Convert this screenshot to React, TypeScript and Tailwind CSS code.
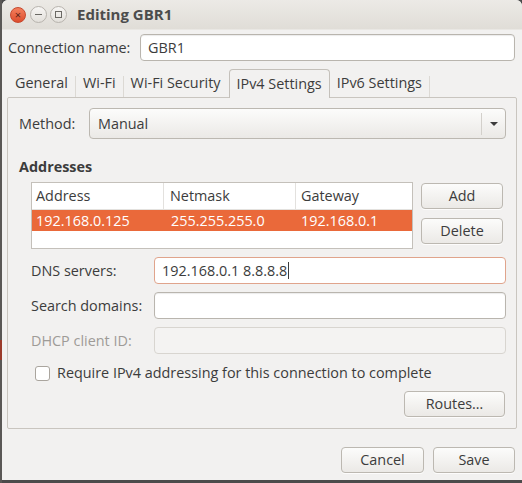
import React from 'react';

const font = { fontFamily: '"Open Sans", "DejaVu Sans", sans-serif' };

function Btn({ label, className = '' }: { label: string; className?: string }) {
  return (
    <div
      className={`flex items-center justify-center h-[26px] rounded-[4px] border border-[#bcb8b1] bg-gradient-to-b from-[#fcfcfb] to-[#ebe9e6] text-[#3c3c3c] shadow-[0_1px_0_rgba(255,255,255,0.8)] ${className}`}
    >
      {label}
    </div>
  );
}

function Field({ value, state = 'normal', className = '' }: { value?: string; state?: 'normal' | 'focus' | 'disabled'; className?: string }) {
  const look =
    state === 'focus'
      ? 'border-[#e0a48c] bg-white'
      : state === 'disabled'
      ? 'border-[#d8d5d0] bg-[#f4f3f2]'
      : 'border-[#b9b5ae] bg-white shadow-[inset_0_1px_1px_rgba(0,0,0,0.08)]';
  return (
    <div className={`flex items-center h-[27px] rounded-[4px] border px-[7px] text-[#3c3c3c] ${look} ${className}`}>
      {value}
      {state === 'focus' && <span className="w-px h-[17px] bg-[#3c3c3c] ml-px" />}
    </div>
  );
}

export default function App() {
  const tabs = ['General', 'Wi-Fi', 'Wi-Fi Security', 'IPv4 Settings', 'IPv6 Settings'];
  return (
    <div className="w-[522px] h-[483px] bg-[#4b4b4b] flex text-[14.4px] text-[#3c3c3c] overflow-hidden" style={font}>
      <div className="w-[2px] flex flex-col">
        <div className="h-[340px] bg-[#5a5856]" />
        <div className="h-[20px] bg-[#9b3b2a]" />
        <div className="flex-1 bg-[#5a5856]" />
      </div>
      <div className="w-[520px] h-[480px] flex flex-col bg-[#f2f1f0] rounded-t-[6px] overflow-hidden">
        {/* title bar */}
        <div className="h-[30px] flex items-center bg-gradient-to-b from-[#eceae6] to-[#e0ddd7] border-b border-[#e9e7e3]">
          <div className="ml-[8px] w-[16px] h-[16px] rounded-full bg-gradient-to-b from-[#f47f5d] to-[#dc4c2c] border border-[#c6482d] flex items-center justify-center text-[#5a2418] text-[11px] leading-none">
            ×
          </div>
          <div className="ml-[4px] w-[17px] h-[17px] rounded-full border border-[#b7b3ad] bg-gradient-to-b from-[#f7f6f4] to-[#e3e0db] flex items-center justify-center">
            <div className="w-[7px] h-px bg-[#6b6964]" />
          </div>
          <div className="ml-[3px] w-[17px] h-[17px] rounded-full border border-[#b7b3ad] bg-gradient-to-b from-[#f7f6f4] to-[#e3e0db] flex items-center justify-center">
            <div className="w-[7px] h-[7px] border border-[#6b6964]" />
          </div>
          <span className="ml-[10px] font-bold text-[15px] text-[#4c4c4c]">Editing GBR1</span>
        </div>

        <div className="flex-1 flex flex-col px-[5px]">
          {/* connection name */}
          <div className="flex items-center mt-[4px] h-[27px]">
            <span className="ml-px w-[132px]">Connection name:</span>
            <Field value="GBR1" className="w-[375px]" />
          </div>

          {/* tabs */}
          <div className="flex items-end h-[28px] mt-[8px] pl-[1px] relative z-10">
            {tabs.map((t, i) => {
              const active = i === 3;
              return (
                <div key={t} className="flex items-end h-full">
                  {(i === 1 || i === 2) && <div className="w-px h-[21px] bg-[#dcd9d4]" />}
                  <div
                    className={
                      active
                        ? 'h-[29px] -mb-px ml-px px-[7px] flex items-center border border-b-0 border-[#c4c0ba] rounded-t-[4px] bg-[#f2f1f0]'
                        : 'h-[28px] px-[7px] flex items-center'
                    }
                  >
                    {t}
                  </div>
                  {i === 4 && <div className="w-px h-[21px] bg-[#dcd9d4]" />}
                </div>
              );
            })}
          </div>

          {/* notebook page */}
          <div className="h-[332px] border border-[#c9c5bf] rounded-[2px] flex flex-col pl-[11px] pr-[10px]">
            <div className="flex items-center mt-[10px] h-[31px]">
              <span className="w-[70px]">Method:</span>
              <div className="flex-1 h-[31px] flex items-center rounded-[4px] border border-[#bcb8b1] bg-gradient-to-b from-[#fcfcfb] to-[#ebe9e6]">
                <span className="flex-1 pl-[8px]">Manual</span>
                <div className="w-px h-[22px] bg-[#d3d0cb]" />
                <div className="w-[23px] flex justify-center">
                  <div className="w-0 h-0 border-l-[4px] border-r-[4px] border-t-[4px] border-l-transparent border-r-transparent border-t-[#3c3c3c]" />
                </div>
              </div>
            </div>

            <div className="mt-[18px] h-[20px] leading-[20px] font-bold">Addresses</div>

            <div className="flex mt-[5px] ml-[12px]">
              <div className="w-[382px] h-[67px] border border-[#c4c0ba] bg-white flex flex-col">
                <div className="h-[27px] flex border-b border-[#e3e1de]">
                  <div className="w-[132px] pl-[4px] flex items-center border-r border-[#e3e1de]">Address</div>
                  <div className="w-[132px] pl-[6px] flex items-center border-r border-[#e3e1de]">Netmask</div>
                  <div className="flex-1 pl-[5px] flex items-center">Gateway</div>
                </div>
                <div className="h-[21px] flex bg-[#ea693a] text-white">
                  <div className="w-[132px] pl-[4px] flex items-center">192.168.0.125</div>
                  <div className="w-[132px] pl-[7px] flex items-center">255.255.255.0</div>
                  <div className="flex-1 pl-[5px] flex items-center">192.168.0.1</div>
                </div>
              </div>
              <div className="ml-[8px] flex flex-col pt-[1px]">
                <Btn label="Add" className="w-[82px]" />
                <Btn label="Delete" className="w-[82px] mt-[9px]" />
              </div>
            </div>

            <div className="flex flex-col gap-[8px] mt-[8px] ml-[12px]">
              <div className="flex items-center">
                <span className="w-[123px]">DNS servers:</span>
                <Field value="192.168.0.1 8.8.8.8" state="focus" className="flex-1" />
              </div>
              <div className="flex items-center">
                <span className="w-[123px]">Search domains:</span>
                <Field className="flex-1" />
              </div>
              <div className="flex items-center">
                <span className="w-[123px] text-[#9e9b97]">DHCP client ID:</span>
                <Field state="disabled" className="flex-1" />
              </div>
            </div>

            <div className="flex items-center mt-[11px] ml-[16px] h-[16px]">
              <div className="w-[15px] h-[15px] rounded-[3px] border border-[#aaa59e] bg-white" />
              <span className="ml-[7px]">Require IPv4 addressing for this connection to complete</span>
            </div>

            <div className="flex justify-end mt-[10px] pr-px">
              <Btn label="Routes…" className="w-[101px]" />
            </div>
          </div>

          {/* dialog buttons */}
          <div className="flex justify-end gap-[9px] mt-[18px] pr-[2px]">
            <Btn label="Cancel" className="w-[83px]" />
            <Btn label="Save" className="w-[82px]" />
          </div>
        </div>
      </div>
    </div>
  );
}
